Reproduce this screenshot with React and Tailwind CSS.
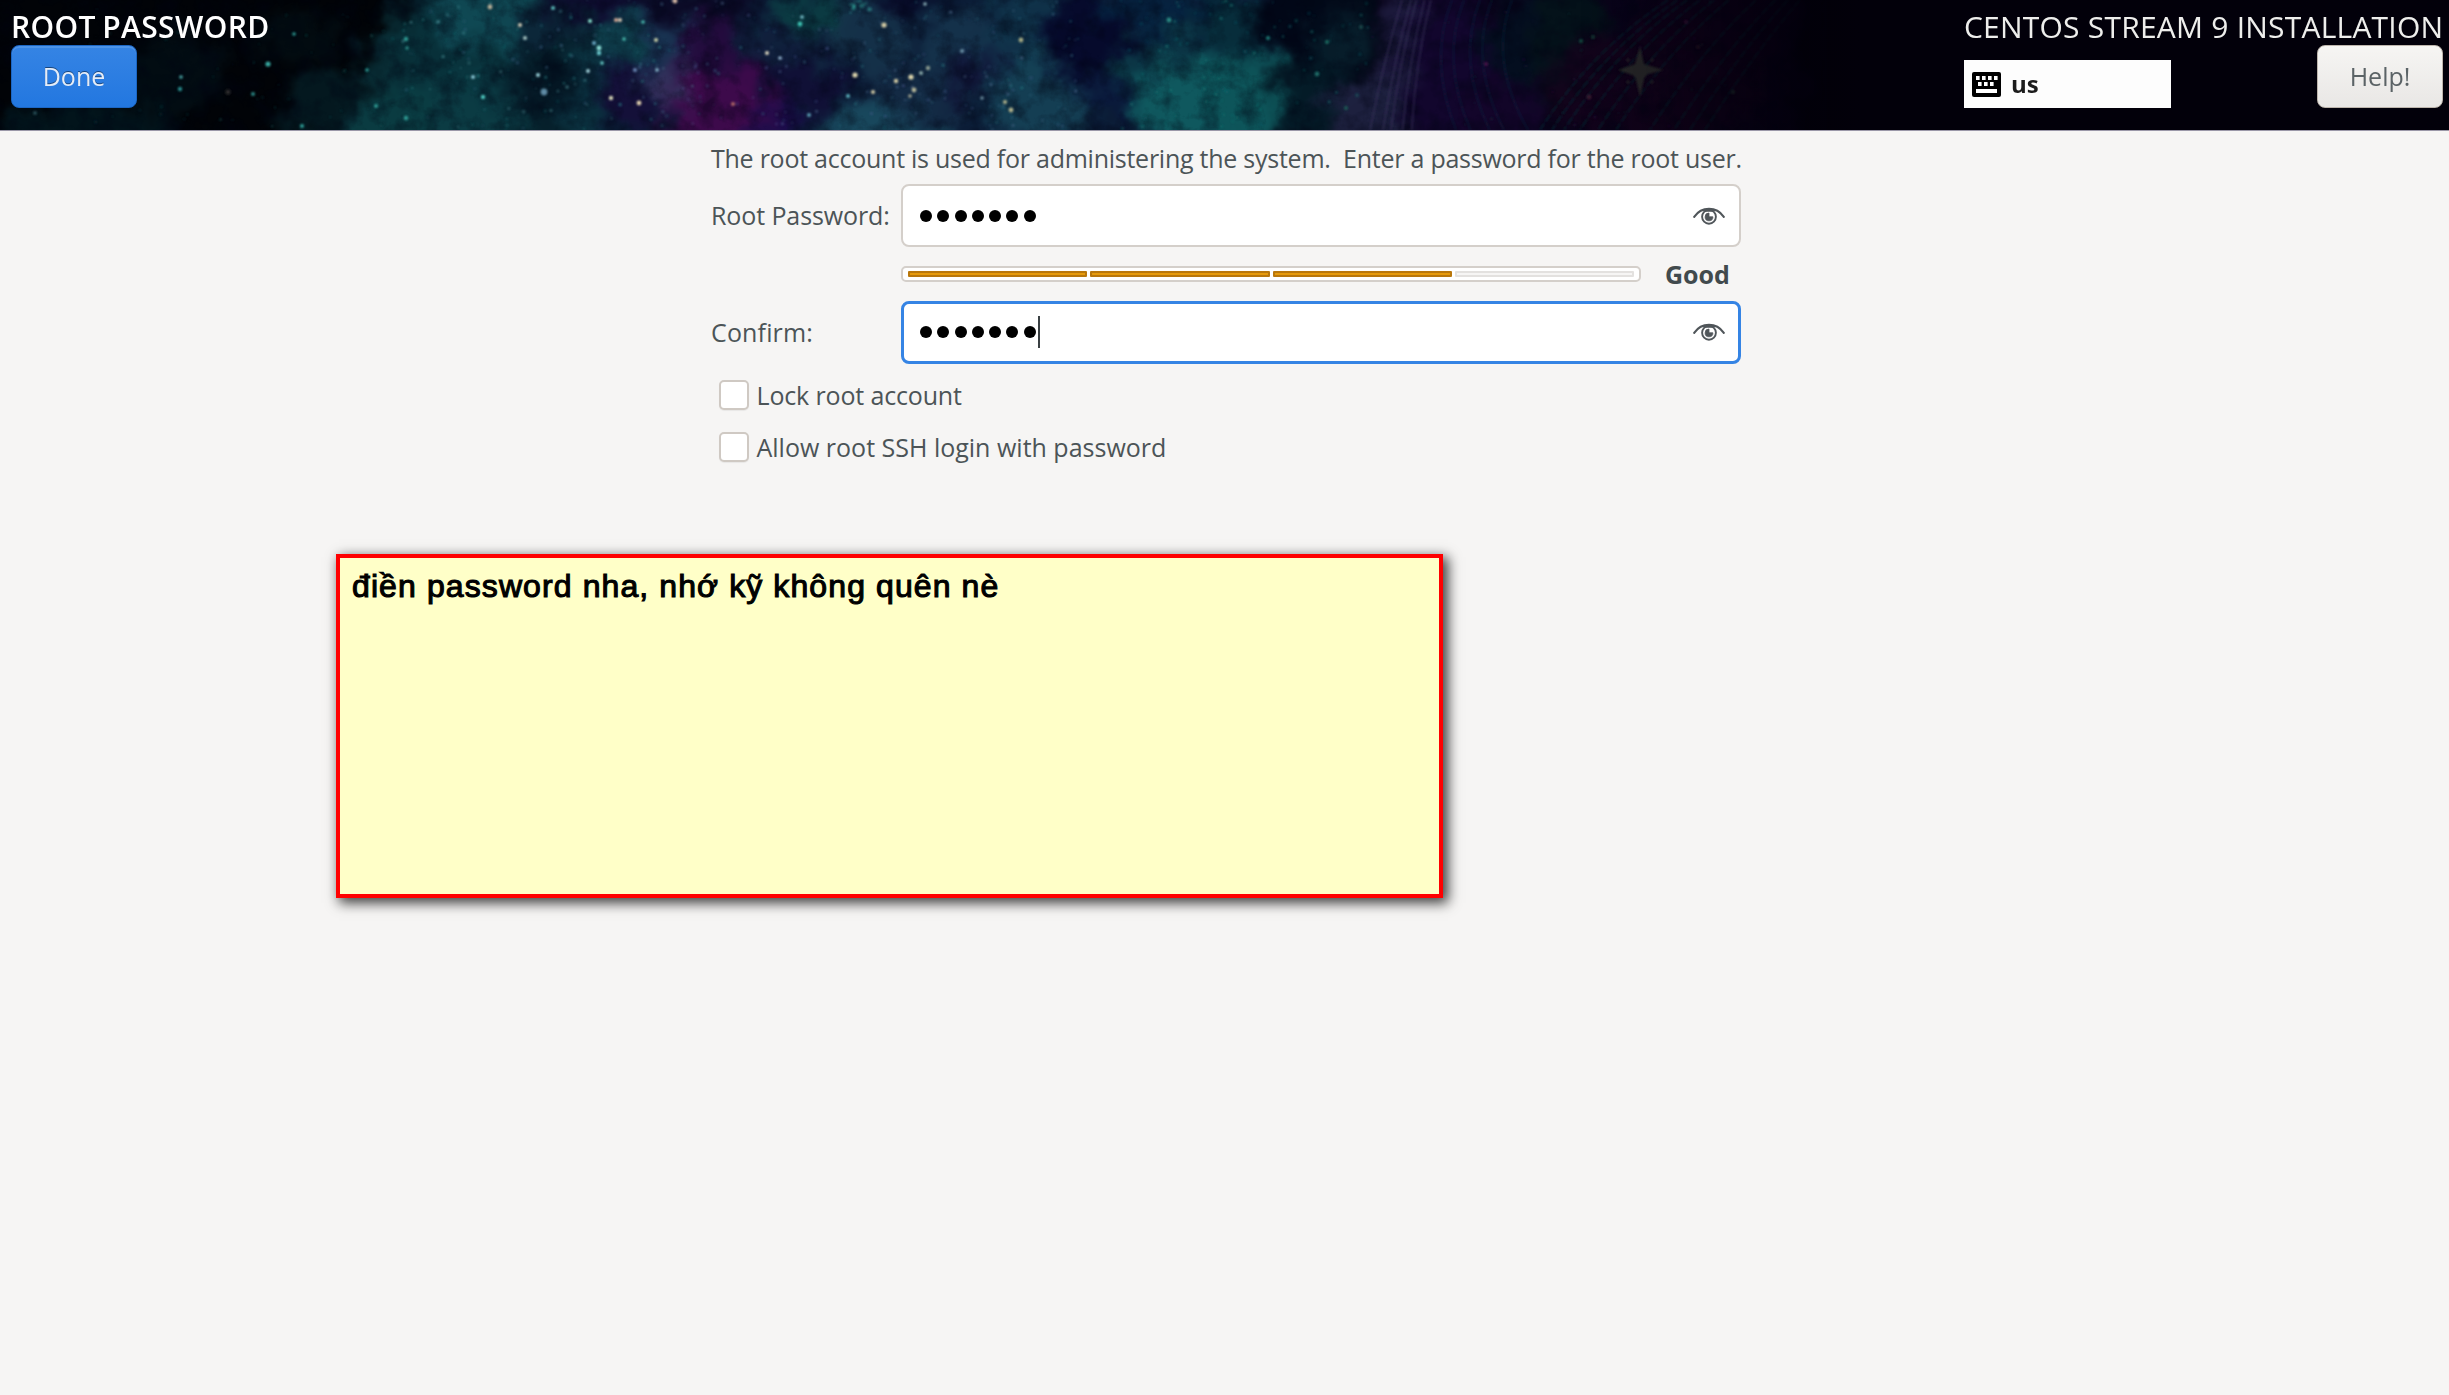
// Soft colour clouds of the banner: [cx, cy, rx, ry, colour, opacity]
const CLOUDS = [
  [90, 130, 90, 30, "#042029", 0.6],
  [175, 75, 50, 40, "#03161e", 0.5],
  [300, 40, 50, 22, "#031319", 0.5],
  [340, 110, 60, 40, "#05222a", 0.7],
  [440, 60, 70, 50, "#09323b", 0.9],
  [430, 130, 90, 40, "#0b3f45", 0.9],
  [495, 15, 60, 35, "#104a54", 0.95],
  [480, 105, 50, 40, "#0b3b44", 0.9],
  [545, 90, 40, 24, "#041522", 0.9],
  [550, 30, 40, 24, "#0b2034", 0.8],
  [590, 100, 25, 50, "#0b3342", 0.8],
  [600, 2, 50, 16, "#0f0a30", 0.9],
  [625, 38, 50, 24, "#0e414c", 0.9],
  [628, 95, 30, 34, "#150f3a", 0.9],
  [670, 50, 30, 60, "#1b3152", 0.8],
  [700, 5, 60, 20, "#0b0a26", 1],
  [725, 60, 50, 45, "#260a3e", 0.9],
  [722, 120, 62, 50, "#3d0a4b", 1],
  [672, 82, 20, 22, "#37325e", 0.8],
  [775, 130, 22, 30, "#1a0c4a", 0.9],
  [790, 40, 60, 26, "#10203c", 0.9],
  [815, 14, 45, 22, "#0b3e44", 0.9],
  [805, 88, 35, 30, "#110f36", 0.9],
  [870, 35, 40, 40, "#15334a", 0.9],
  [880, 130, 60, 28, "#1a4c60", 0.9],
  [920, 90, 60, 30, "#142c46", 0.9],
  [905, 3, 30, 15, "#080a28", 0.9],
  [960, 50, 40, 35, "#15344c", 0.9],
  [975, 75, 30, 22, "#101236", 0.8],
  [1030, 30, 40, 50, "#113a50", 0.75],
  [1040, 100, 55, 45, "#154256", 0.9],
  [1085, 35, 42, 40, "#060a2c", 1],
  [1110, 95, 30, 25, "#0a1a3c", 0.9],
  [1160, 10, 60, 20, "#052440", 0.9],
  [1165, 70, 50, 40, "#0b3b48", 0.9],
  [1195, 105, 60, 50, "#0f585e", 1],
  [1245, 100, 42, 50, "#0e555a", 0.95],
  [1230, 25, 35, 30, "#07303c", 0.9],
  [1300, 25, 50, 35, "#020818", 1],
  [1315, 95, 40, 35, "#051f2b", 0.8],
  [1340, 40, 30, 25, "#0a2a36", 0.6],
  [1370, 115, 45, 40, "#202242", 0.9],
  [1405, 45, 20, 60, "#1e1b3e", 0.95],
  [1450, 70, 45, 80, "#12062d", 1],
  [1500, 115, 50, 40, "#14052a", 0.9],
  [1530, 40, 45, 50, "#041020", 0.9],
  [1570, 45, 40, 60, "#04131a", 0.9],
  [1660, 85, 110, 60, "#14031c", 0.9],
  [1710, 20, 70, 40, "#12031a", 0.8],
];

// Brightest stars: [x, y, r, colour]
const STARS = [
  [294, 34, 1.8, "#2a9a92"], [268, 64, 2.6, "#38aaa2"], [180, 89, 2.2, "#2a8a8c"],
  [181, 77, 1.8, "#4aa8a8"], [253, 94, 2, "#2a8a86"], [228, 92, 2.6, "#2b2a2c"], [35, 113, 1.8, "#2c5660"],
  [367, 70, 1.8, "#2a9a92"], [406, 39, 2.2, "#2f9a92"], [406, 118, 2.2, "#2f9a92"], [376, 106, 2, "#2f9a92"],
  [302, 126, 2, "#2f9f98"], [407, 48, 1.8, "#2a8a84"], [473, 77, 2, "#8ac6d4"], [483, 97, 2.2, "#4cc6be"],
  [520, 25, 2, "#d2c9b4"], [525, 38, 2, "#a9c6c4"], [538, 75, 2, "#9ad4dc"], [588, 71, 2, "#9fd0d8"],
  [599, 48, 2.4, "#8fe0d8"], [599, 53, 2.2, "#6ac8cc"], [594, 43, 2, "#6aa8c4"], [590, 21, 2, "#8ae0cc"],
  [544, 92, 3.4, "#5f8aa4"], [602, 63, 1.8, "#6ad0cc"], [490, 7, 2.4, "#b9b098"], [553, 8, 2, "#5ab8b6"],
  [611, 98, 2.2, "#d8d9b8"], [616, 20, 2, "#d8a994"], [620, 20, 2, "#d8c9b4"], [643, 22, 1.8, "#4cbcb0"],
  [624, 39, 1.8, "#4cbcb0"], [635, 70, 2, "#6a86b4"], [675, 1, 2.4, "#d8b9a4"], [656, 40, 2, "#c9d0a8"],
  [639, 103, 2.4, "#e0d0ae"], [733, 104, 2, "#b06a68"], [657, 70, 1.8, "#8ab8cc"], [767, 53, 2, "#dcd6c0"],
  [780, 58, 1.8, "#9ab8d4"], [800, 24, 2.4, "#3cc0b0"], [802, 17, 1.8, "#7ac0cc"], [884, 25, 2.6, "#d4cba4"],
  [855, 75, 2.6, "#ded6ae"], [873, 92, 2, "#d4cba4"], [896, 81, 2.2, "#d4cba4"], [911, 77, 2.6, "#e0d8ae"],
  [928, 68, 2.2, "#8c9c90"], [914, 90, 2.4, "#b8b89a"], [910, 96, 1.8, "#a8a890"], [921, 73, 2, "#8aa8a8"],
  [925, 4, 1.8, "#8ab0b8"], [962, 51, 2, "#6a90a4"], [1021, 40, 2.4, "#a8ac84"], [1005, 102, 2, "#b4b48c"],
  [1011, 110, 2.4, "#b4b48c"], [982, 98, 1.8, "#6a8a9c"], [848, 96, 2, "#5ab0bc"], [809, 115, 2, "#5a9ab0"],
  [1169, 20, 2.4, "#2a8a84"], [1317, 74, 2.4, "#1f6a66"], [1346, 108, 2, "#1f5a54"], [1268, 38, 2, "#237a74"],
  [1327, 42, 2, "#1f6a60"], [1361, 27, 2, "#1f4a4c"], [1486, 64, 2, "#4a1a48"], [1581, 41, 2, "#144a40"],
  [1593, 37, 2, "#143a34"], [1589, 97, 2.4, "#3a1a30"], [1686, 22, 2, "#3a1038"], [1698, 47, 2, "#2a1828"],
  [1733, 92, 2, "#243834"],
];

function scatter(count, x0, x1, seed, colours, maxR) {
  let s = seed;
  const next = () => ((s = (s * 16807) % 2147483647) / 2147483647);
  return Array.from({ length: count }, () => ({
    x: x0 + next() * (x1 - x0),
    y: next() * 130,
    r: 0.7 + next() * maxR,
    o: 0.15 + next() * 0.4,
    c: colours[Math.floor(next() * colours.length)],
  }));
}

const DUST = [
  ...scatter(50, 90, 400, 71, ["#14504f", "#1c6b6b", "#12363f"], 1),
  ...scatter(150, 400, 700, 1234, ["#2f8f92", "#5aa6ac", "#466f92", "#1f7f7f"], 1.2),
  ...scatter(190, 680, 1080, 991, ["#3b7089", "#5b7aa0", "#51609a", "#2c8088"], 1.1),
  ...scatter(110, 1120, 1370, 555, ["#178079", "#1a8c84", "#12606a"], 1.2),
  ...scatter(40, 1370, 1740, 808, ["#12403c", "#2a1440", "#153035"], 1),
  ...scatter(150, 850, 870, 42, ["#2fa69c", "#3cb0a8"], 1.6).filter((p) => p.y < 14),
];

function Nebula() {
  return (
    <svg className="absolute inset-0 h-full w-full" viewBox="0 0 2449 130" preserveAspectRatio="none" aria-hidden="true">
      <defs>
        <filter id="cloud" x="-60" y="-60" width="2569" height="250" filterUnits="userSpaceOnUse" colorInterpolationFilters="sRGB">
          <feGaussianBlur stdDeviation="8" result="soft" />
          <feTurbulence type="fractalNoise" baseFrequency="0.03" numOctaves="5" seed="7" result="noise" />
          <feDisplacementMap in="soft" in2="noise" scale="50" xChannelSelector="R" yChannelSelector="G" result="warped" />
          <feGaussianBlur in="warped" stdDeviation="1.2" />
        </filter>
        <filter id="grain" x="0" y="0" width="1800" height="130" filterUnits="userSpaceOnUse" colorInterpolationFilters="sRGB">
          <feTurbulence type="fractalNoise" baseFrequency="0.05" numOctaves="5" seed="23" />
          <feColorMatrix values="0 0 0 0 0  0 0 0 0 0.01  0 0 0 0 0.07  2.2 0 0 0 -0.9" />
        </filter>
        <filter id="haze" x="0" y="0" width="2449" height="130" filterUnits="userSpaceOnUse">
          <feGaussianBlur stdDeviation="0.9" />
        </filter>
        <linearGradient id="fade" x1="0" x2="1">
          <stop offset="0" stopColor="#02000a" stopOpacity="0" />
          <stop offset="1" stopColor="#02000a" />
        </linearGradient>
      </defs>
      <rect width="2449" height="130" fill="#010308" />
      <g filter="url(#cloud)">
        <rect x="-60" y="-60" width="460" height="250" fill="#010307" />
        <rect x="400" y="-60" width="240" height="250" fill="#06212c" />
        <rect x="600" y="-60" width="680" height="250" fill="#0b1c36" />
        <rect x="1270" y="-60" width="120" height="250" fill="#030c1a" />
        <rect x="1380" y="-60" width="420" height="250" fill="#09031a" />
        {CLOUDS.map(([cx, cy, rx, ry, c, o], i) => (
          <ellipse key={i} cx={cx} cy={cy} rx={rx} ry={ry} fill={c} opacity={o} />
        ))}
      </g>
      <rect width="1800" height="130" filter="url(#grain)" opacity="0.45" />
      <g fill="none" strokeWidth="1.8" filter="url(#haze)">
        {[0, 10, 16, 25, 32].map((d) => (
          <path key={d} d={`M${1402 + d * 0.9} 0Q${1384 + d} 60 ${1370 + d * 1.3} 130`} stroke="#3b3560" opacity="0.5" />
        ))}
        {[0, 12, 28, 40, 60].map((d) => (
          <path key={d} d={`M${1452 + d} 0Q${1428 + d} 60 ${1456 + d * 1.2} 130`} stroke="#17304a" opacity="0.35" />
        ))}
        {[0, 12, 24, 40, 58, 76, 110, 134, 150, 165].map((d) => (
          <path key={d} d={`M${1668 + d * 0.8} 0Q${1590 + d} 52 ${1540 + d} 130`} stroke="#0c2d35" strokeDasharray="9 2" opacity="0.6" />
        ))}
      </g>
      <g filter="url(#haze)">
        {DUST.map((p, i) => (
          <circle key={i} cx={p.x} cy={p.y} r={p.r} fill={p.c} opacity={p.o} />
        ))}
        {STARS.map(([x, y, r, c], i) => (
          <circle key={i} cx={x} cy={y} r={r} fill={c} />
        ))}
        <g fill="#292c2a">
          <path d="M1640 46l4 18 20 6-19 5-5 22-5-21-17-6 17-6z" />
          <circle cx="1640" cy="71" r="8" />
          <circle cx="1628" cy="60" r="1.5" />
          <circle cx="1652" cy="60" r="1.5" />
          <circle cx="1628" cy="82" r="1.5" />
          <circle cx="1652" cy="82" r="1.5" />
        </g>
      </g>
      <rect x="1580" width="280" height="130" fill="url(#fade)" />
      <rect x="1860" width="589" height="130" fill="#02000a" />
    </svg>
  );
}

function Eye() {
  return (
    <svg className="h-[18px] w-8" viewBox="0 0 32 18" fill="none" stroke="#50565a" aria-hidden="true">
      <path d="M1.2 9.8C5 4.4 10 1.9 16 1.9s11 2.5 14.8 7.9" strokeWidth="2.1" strokeLinecap="round" />
      <path d="M9.5 2.6h13l-3 1.6h-7z" fill="#50565a" strokeWidth="1" />
      <circle cx="16" cy="9.8" r="6.9" strokeWidth="1.9" />
      <path d="M16 6v3.8h3.9A3.9 3.9 0 1 1 16 6z" fill="#50565a" strokeWidth="0.8" />
    </svg>
  );
}

function Dots() {
  return (
    <div className="flex gap-[5.3px]">
      {Array.from({ length: 7 }, (_, i) => (
        <span key={i} className="size-3 rounded-full bg-black" />
      ))}
    </div>
  );
}

function Keyboard() {
  return (
    <svg className="h-[25px] w-[29px]" viewBox="0 0 29 25" aria-hidden="true">
      <rect width="29" height="25" rx="2" fill="#000" />
      <g fill="#fff">
        {[4, 10, 16, 22].map((x) => (
          <rect key={x} x={x} y="4" width="3.6" height="4" />
        ))}
        {[6, 12, 18].map((x) => (
          <rect key={x} x={x} y="10" width="3.6" height="4" />
        ))}
        <rect x="4" y="17" width="21" height="4" />
      </g>
    </svg>
  );
}

function CheckRow({ label, className }) {
  return (
    <label className="flex h-[34px] items-center">
      <span className="mr-2 ml-[7.5px] size-[30px] rounded-[5px] border-2 border-[#cfc9c3] bg-white shadow-[0_1px_1px_rgba(0,0,0,0.06)]" />
      <span className={className}>{label}</span>
    </label>
  );
}

export default function App() {
  return (
    <div className="relative h-[1395px] w-full overflow-hidden bg-[#f6f5f4] font-['Open_Sans',sans-serif] text-[25px] leading-[34px] text-[#4c5457]">
      <header className="relative h-[131px] overflow-hidden border-b border-[#9b98a8] bg-[#02000a]">
        <Nebula />
        <div className="relative flex justify-between pr-[6px] pl-[11px]">
          <div className="pt-[7px]">
            <h1 className="h-[38px] text-[30px] leading-[40px] font-semibold tracking-[0.4px] whitespace-nowrap text-white [word-spacing:-2px]">ROOT PASSWORD</h1>
            <button className="flex h-[63px] w-[126px] items-center justify-center rounded-[8px] border border-[#1b66c4] bg-linear-to-b from-[#3584e4] to-[#2277e0] pb-[2px] text-[#e4edf9] shadow-[inset_0_2px_0_rgba(255,255,255,0.12)] [text-shadow:0_-1px_0_rgba(0,0,0,0.45)]">
              Done
            </button>
          </div>
          <div className="w-[479px] pt-[7px]">
            <h2 className="h-[38px] text-[30px] leading-[40px] font-normal tracking-[0.22px] whitespace-nowrap text-[#eeeeec]">CENTOS STREAM 9 INSTALLATION</h2>
            <div className="flex items-start justify-between">
              <div className="mt-[15px] flex h-[48px] w-[207px] items-center gap-[10px] bg-[#fdfdfd] pl-[8px] text-[24px] font-bold text-[#1c1c1c]">
                <Keyboard />
                us
              </div>
              <button className="flex h-[63px] w-[126px] items-center justify-center rounded-[8px] border border-[#bdb5ac] bg-linear-to-b from-[#f6f5f3] to-[#e9e7e5] pb-[2px] text-[#5b6366]">
                Help!
              </button>
            </div>
          </div>
        </div>
      </header>

      <main className="ml-[711px] w-[1030px] pt-[10px]">
        <p className="h-[43px] tracking-[-0.25px] whitespace-pre">The root account is used for administering the system.{"\u00a0 "}Enter a password for the root user.</p>
        <div className="grid grid-cols-[190px_840px] items-center">
          <span className="pb-px tracking-[-0.1px]">Root Password:</span>
          <div className="flex h-[63px] items-center justify-between rounded-[8px] border-2 border-[#d4cfca] bg-white pr-[14px] pl-[17px]">
            <Dots />
            <Eye />
          </div>
          <span />
          <div className="flex h-[54px] items-center">
            <div className="flex h-4 w-[740px] items-center gap-[3px] rounded-[5px] border-2 border-[#d4cfca] bg-white px-[5px]">
              <span className="h-[6px] flex-1 rounded-[1px] border-2 border-[#b9770b] bg-[#e69a0c]" />
              <span className="h-[6px] flex-1 rounded-[1px] border-2 border-[#b9770b] bg-[#e69a0c]" />
              <span className="h-[6px] flex-1 rounded-[1px] border-2 border-[#b9770b] bg-[#e69a0c]" />
              <span className="h-[6px] flex-1 rounded-[1px] border-2 border-[#e3e1df] bg-[#f6f5f4]" />
            </div>
            <b className="ml-[24px] text-[#414a4d]">Good</b>
          </div>
          <span className="pb-[2px] tracking-[0.15px]">Confirm:</span>
          <div className="flex h-[63px] items-center justify-between rounded-[8px] border-[3px] border-[#3584e4] bg-white pr-[13px] pb-[2px] pl-[16px]">
            <div className="flex items-center gap-[2px]">
              <Dots />
              <span className="h-8 w-[2px] bg-[#3a4043]" />
            </div>
            <Eye />
          </div>
        </div>
        <div className="mt-[14px] flex flex-col gap-[18px]">
          <CheckRow label="Lock root account" className="pb-px tracking-[-0.15px]" />
          <CheckRow label="Allow root SSH login with password" className="pb-px" />
        </div>
      </main>

      <aside className="absolute top-[554px] left-[336px] h-[344px] w-[1107px] border-4 border-[#ff0000] bg-[#ffffc8] px-[12px] pt-[8px] shadow-[4px_4px_12px_1px_rgba(0,0,0,0.75)]">
        <p className="font-['Liberation_Sans',sans-serif] text-[32px] leading-[40px] tracking-[1.1px] whitespace-nowrap text-black [-webkit-text-stroke:1.1px_black]">điền password nha, nhớ kỹ không quên nè</p>
      </aside>
    </div>
  );
}
